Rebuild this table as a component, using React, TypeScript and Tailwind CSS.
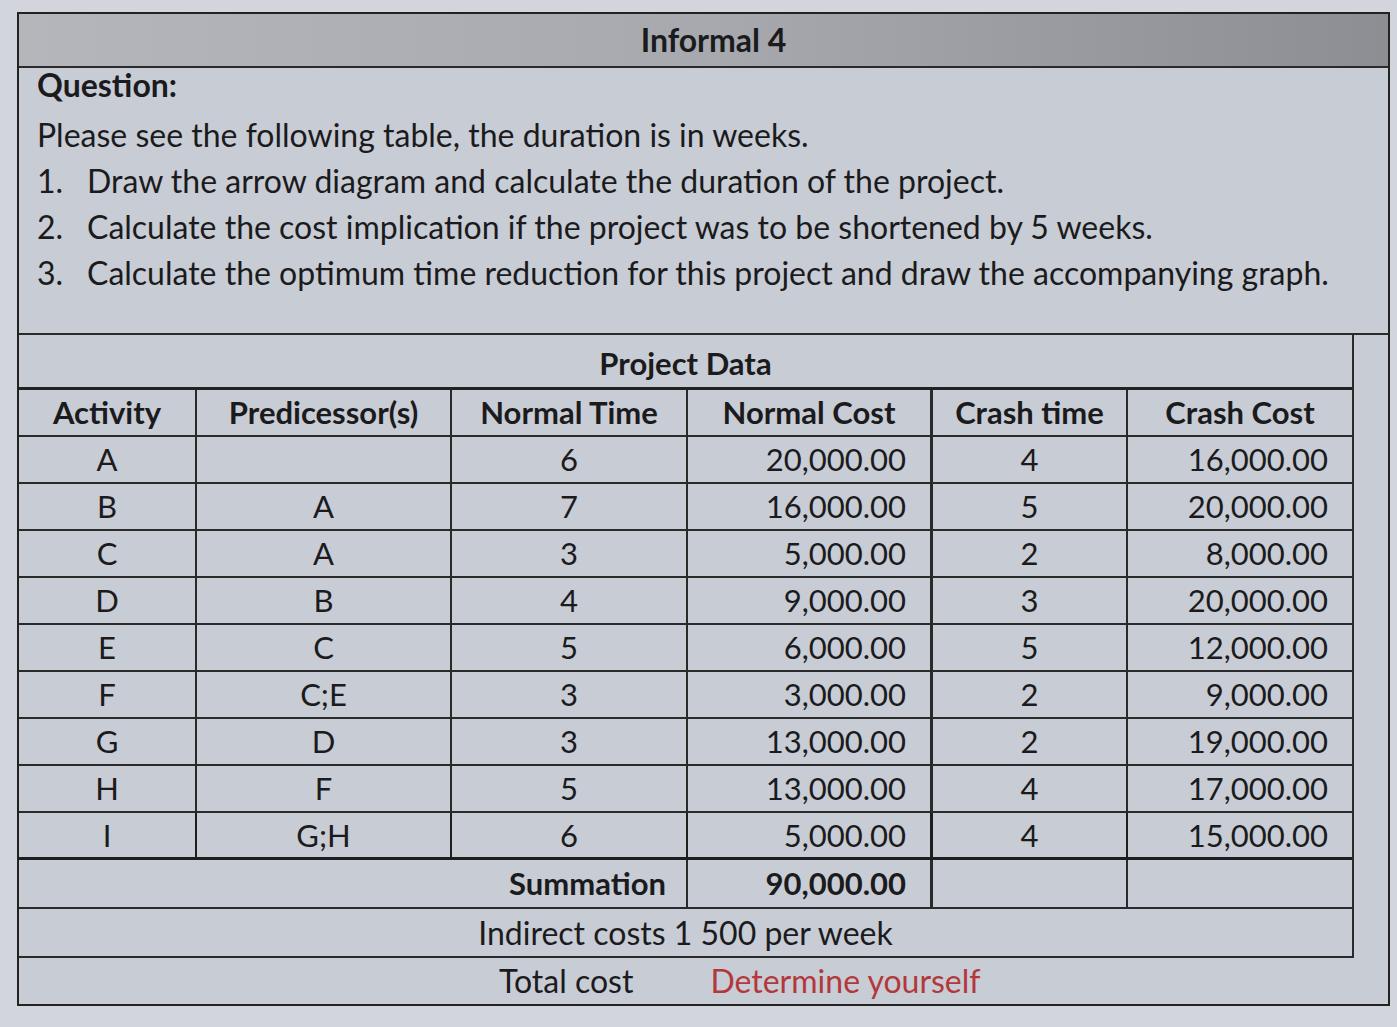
import React from "react";

const rows = [
  ["A", "", "6", "20,000.00", "4", "16,000.00"],
  ["B", "A", "7", "16,000.00", "5", "20,000.00"],
  ["C", "A", "3", "5,000.00", "2", "8,000.00"],
  ["D", "B", "4", "9,000.00", "3", "20,000.00"],
  ["E", "C", "5", "6,000.00", "5", "12,000.00"],
  ["F", "C;E", "3", "3,000.00", "2", "9,000.00"],
  ["G", "D", "3", "13,000.00", "2", "19,000.00"],
  ["H", "F", "5", "13,000.00", "4", "17,000.00"],
  ["I", "G;H", "6", "5,000.00", "4", "15,000.00"],
];

const headers = ["Activity", "Predicessor(s)", "Normal Time", "Normal Cost", "Crash time", "Crash Cost"];

export default function App() {
  return (
    <div
      className="w-[1397px] h-[1027px] bg-[#d2d5db] pt-[12px] pl-[17px] text-[#1b1b1d]"
      style={{ fontFamily: "Lato, 'Noto Sans', sans-serif" }}
    >
      <div className="w-[1373px] border-2 border-[#222] bg-[#c8ccd4]">
        {/* Title bar */}
        <div className="h-[54px] border-b-2 border-[#2a2a2a] bg-gradient-to-r from-[#b4b6bc] via-[#a7a9ae] to-[#8c8e93] flex items-center justify-center pl-[20px]">
          <span className="text-[32px] font-bold leading-none">Informal 4</span>
        </div>

        {/* Question */}
        <div className="h-[267px] border-b-2 border-[#2a2a2a] pl-[18px] text-[32px]">
          <div className="font-bold leading-[34px]">Question:</div>
          <div className="mt-[10px] leading-[46px]">Please see the following table, the duration is in weeks.</div>
          <div className="flex leading-[46px]">
            <span className="w-[50px]">1.</span>
            <span>Draw the arrow diagram and calculate the duration of the project.</span>
          </div>
          <div className="flex leading-[46px]">
            <span className="w-[50px]">2.</span>
            <span>Calculate the cost implication if the project was to be shortened by 5 weeks.</span>
          </div>
          <div className="flex leading-[46px]">
            <span className="w-[50px]">3.</span>
            <span>Calculate the optimum time reduction for this project and draw the accompanying graph.</span>
          </div>
        </div>

        {/* Table */}
        <div className="w-[1335px] border-r-2 border-[#2a2a2a] text-[31px]">
          <div className="h-[55px] border-b-[3px] border-[#222] flex items-center justify-center pt-[4px]">
            <span className="font-bold">Project Data</span>
          </div>
          <div className="grid grid-cols-[178px_255px_236px_245px_195px_224px]">
            {headers.map((h, i) => (
              <div
                key={h}
                className={`h-[47px] border-b-2 border-[#2a2a2a] flex items-center justify-center font-bold ${
                  i < 5 ? (i === 3 ? "border-r-[3px]" : "border-r-2") : ""
                }`}
              >
                {h}
              </div>
            ))}
            {rows.map((r, ri) =>
              r.map((c, ci) => (
                <div
                  key={`${ri}-${ci}`}
                  className={`h-[47px] flex items-center ${
                    ri === rows.length - 1 ? "border-b-[3px] border-[#1e1e1e]" : "border-b-2 border-[#2a2a2a]"
                  } ${ci < 5 ? (ci === 3 ? "border-r-[3px]" : "border-r-2") : ""} ${
                    ci === 3 || ci === 5 ? "justify-end pr-[24px]" : "justify-center"
                  }`}
                >
                  {c}
                </div>
              ))
            )}
          </div>
          <div className="grid grid-cols-[669px_245px_195px_224px]">
            <div className="h-[49px] border-b-2 border-r-2 border-[#2a2a2a] flex items-center justify-end pr-[20px] font-bold">
              Summation
            </div>
            <div className="h-[49px] border-b-2 border-r-[3px] border-[#2a2a2a] flex items-center justify-end pr-[24px] font-bold">
              90,000.00
            </div>
            <div className="h-[49px] border-b-2 border-r-2 border-[#2a2a2a]"></div>
            <div className="h-[49px] border-b-2 border-[#2a2a2a]"></div>
          </div>
          <div className="h-[49px] border-b-2 border-[#2a2a2a] flex items-center justify-center text-[32px]">
            Indirect costs 1 500 per week
          </div>
        </div>

        {/* Total cost */}
        <div className="h-[46px] flex items-center pl-[480px] text-[32px]">
          <span>Total cost</span>
          <span className="ml-[77px] text-[#b3383c]">Determine yourself</span>
        </div>
      </div>
    </div>
  );
}
